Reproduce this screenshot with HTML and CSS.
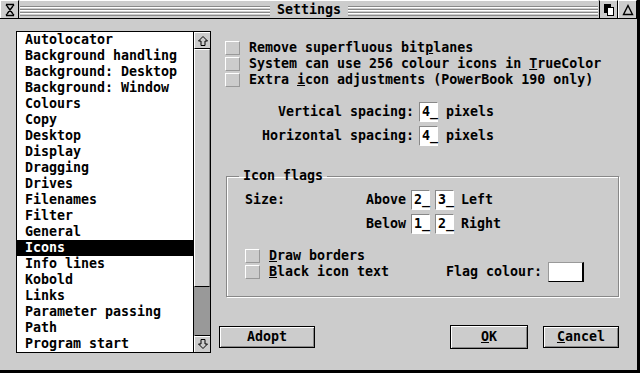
FILE: index.html
```html
<!DOCTYPE html>
<html lang="en">
<head>
  <meta charset="UTF-8">
  <title>Settings</title>
  <link rel="stylesheet" href="styles.css">
</head>
<body>
<div class="window">
  <div class="titlebar">
    <div class="tbox closer">
      <svg width="12" height="14" viewBox="0 0 12 14"><path d="M2 1.5H10M2 12.5H10M2.5 1.5V3M9.5 1.5V3M2.5 11V12.5M9.5 11V12.5M3 3L9 11M9 3L3 11" stroke="#000" stroke-width="1.4" fill="none"/></svg>
    </div>
    <div class="stripes"><span class="title">Settings</span></div>
    <div class="tbox">
      <svg width="12" height="14" viewBox="0 0 12 14"><rect x="1" y="1" width="7" height="9" fill="#000"/><rect x="4.5" y="4.5" width="6" height="8" fill="#fff" stroke="#000"/></svg>
    </div>
    <div class="tbox">
      <svg width="12" height="14" viewBox="0 0 12 14"><path d="M6 2.5L10.5 11.5H1.5Z" stroke="#000" stroke-width="1.4" fill="none"/></svg>
    </div>
  </div>

  <div class="main">
    <div class="listbox">
      <ul class="list">
        <li>Autolocator</li>
        <li>Background handling</li>
        <li>Background: Desktop</li>
        <li>Background: Window</li>
        <li>Colours</li>
        <li>Copy</li>
        <li>Desktop</li>
        <li>Display</li>
        <li>Dragging</li>
        <li>Drives</li>
        <li>Filenames</li>
        <li>Filter</li>
        <li>General</li>
        <li class="selected">Icons</li>
        <li>Info lines</li>
        <li>Kobold</li>
        <li>Links</li>
        <li>Parameter passing</li>
        <li>Path</li>
        <li>Program start</li>
      </ul>
      <div class="scrollbar">
        <div class="arrow up">
          <svg width="12" height="12" viewBox="0 0 12 12"><path d="M6 1.5L10.5 6H8V10.5H4V6H1.5Z" stroke="#000" fill="none"/></svg>
        </div>
        <div class="thumb"></div>
        <div class="track"></div>
        <div class="arrow down">
          <svg width="12" height="12" viewBox="0 0 12 12"><path d="M6 10.5L10.5 6H8V1.5H4V6H1.5Z" stroke="#000" fill="none"/></svg>
        </div>
      </div>
    </div>

    <div class="panel">
      <div class="checks">
        <div class="check"><span class="box"></span><span>Remove superfluous bit<u>p</u>lanes</span></div>
        <div class="check"><span class="box"></span><span>System can use 256 colour icons in <u>T</u>rueColor</span></div>
        <div class="check"><span class="box"></span><span>Extra <u>i</u>con adjustments (PowerBook 190 only)</span></div>
      </div>

      <div class="spacing">
        <span class="label">Vertical spacing:</span><span class="field">4_</span><span>pixels</span>
        <span class="label">Horizontal spacing:</span><span class="field">4_</span><span>pixels</span>
      </div>

      <fieldset class="group">
        <legend>Icon flags</legend>
        <div class="sizes">
          <div class="size-row"><span class="size-label">Size:</span><span>Above</span><span class="field">2_</span><span class="field">3_</span><span>Left</span></div>
          <div class="size-row"><span class="size-label"></span><span>Below</span><span class="field">1_</span><span class="field">2_</span><span>Right</span></div>
        </div>
        <div class="flag-checks">
          <div class="check"><span class="box"></span><span><u>D</u>raw borders</span></div>
          <div class="check">
            <span class="flag-text"><span class="box"></span><span><u>B</u>lack icon text</span></span>
            <span>Flag colour:</span><span class="swatch"></span>
          </div>
        </div>
      </fieldset>

      <div class="buttons">
        <button class="btn adopt">Adopt</button>
        <button class="btn ok"><u>O</u>K</button>
        <button class="btn cancel"><u>C</u>ancel</button>
      </div>
    </div>
  </div>
</div>
</body>
</html>
```

FILE: styles.css
```css
* {
  margin: 0;
  padding: 0;
  box-sizing: border-box;
}

body {
  background: #000;
  width: 640px;
  height: 373px;
  overflow: hidden;
  font-family: "DejaVu Sans Mono", "Liberation Mono", monospace;
  font-weight: bold;
  font-size: 13.3px;
  line-height: 16px;
  color: #000;
}

.window {
  width: 637px;
  height: 370px;
  background: #cccccc;
}

/* title bar */
.titlebar {
  height: 19px;
  display: flex;
  border-bottom: 1px solid #000;
  background: #cccccc;
}

.tbox {
  width: 19px;
  height: 18px;
  display: flex;
  align-items: center;
  justify-content: center;
  border-top: 1px solid #fff;
  border-left: 1px solid #fff;
  border-right: 1px solid #000;
}

.stripes {
  flex: 1;
  display: flex;
  align-items: center;
  justify-content: center;
  margin: 0 1px;
  border-top: 1px solid #fff;
  background: repeating-linear-gradient(#cccccc 0 1px, #888 1px 2px, #fff 2px 3px) 0 4px / 100% 11px no-repeat, #cccccc;
}

.stripes + .tbox {
  border-left: 1px solid #000;
}

.title {
  background: #cccccc;
  padding: 0 7px;
  line-height: 17px;
}

/* main area */
.main {
  display: flex;
  padding: 12px 0 0 16px;
  gap: 8px;
}

.listbox {
  display: flex;
  width: 195px;
  height: 322px;
  border: 1px solid #000;
}

.list {
  list-style: none;
  width: 176px;
  background: #fff;
}

.list li {
  height: 16px;
  padding-left: 8px;
  white-space: nowrap;
}

.list li.selected {
  background: #000;
  color: #fff;
}

.scrollbar {
  width: 17px;
  border-left: 1px solid #000;
  display: flex;
  flex-direction: column;
  background: #999;
}

.arrow {
  height: 17px;
  display: flex;
  align-items: center;
  justify-content: center;
  background: #cccccc;
  border-top: 1px solid #fff;
  border-left: 1px solid #fff;
}

.arrow.up {
  border-bottom: 1px solid #000;
}

.arrow.down {
  border-top: 1px solid #000;
  box-shadow: inset 0 1px #fff;
}

.thumb {
  height: 238px;
  background: #cccccc;
  border-top: 1px solid #fff;
  border-left: 1px solid #fff;
  border-right: 1px solid #888;
  border-bottom: 1px solid #000;
}

.track {
  flex: 1;
}

/* right panel */
.panel {
  width: 400px;
  height: 322px;
  display: flex;
  flex-direction: column;
}

.checks {
  margin: 9px 0 0 6px;
}

.check {
  display: flex;
  align-items: center;
  height: 16px;
  white-space: pre;
}

.box {
  width: 15px;
  height: 14px;
  margin-right: 9px;
  flex: none;
  background: #cccccc;
  border-top: 1px solid #fff;
  border-left: 1px solid #fff;
  border-right: 1px solid #999;
  border-bottom: 1px solid #999;
}

.spacing {
  display: grid;
  grid-template-columns: 189px 19px auto;
  column-gap: 5px;
  row-gap: 4px;
  align-items: center;
  margin: 14px 0 0 6px;
}

.spacing .label {
  text-align: right;
}

.spacing .field + span {
  padding-left: 3px;
}

.field {
  display: inline-block;
  width: 19px;
  height: 20px;
  line-height: 18px;
  padding-left: 2px;
  background: #fff;
  border-top: 1px solid #888;
  border-left: 1px solid #888;
  border-right: 1px solid #fff;
  border-bottom: 1px solid #fff;
}

.group {
  margin: 22px 0 0 7px;
  border: 1px solid #888;
  box-shadow: inset 1px 1px #fff, 1px 1px #fff;
  padding: 0 0 16px 0;
}

.group legend {
  margin-left: 12px;
  padding: 0 4px;
  line-height: 16px;
}

.sizes {
  display: flex;
  flex-direction: column;
  gap: 4px;
  margin: 6px 0 0 18px;
}

.size-row {
  display: flex;
  align-items: center;
  gap: 5px;
  height: 20px;
}

.size-row .field + .field {
  margin-right: 2px;
}

.size-label {
  width: 116px;
}

.flag-checks {
  margin: 14px 0 0 18px;
}

.flag-text {
  display: flex;
  align-items: center;
  width: 201px;
}

.swatch {
  width: 36px;
  height: 20px;
  margin-left: 6px;
  background: #fff;
  border-top: 1px solid #999;
  border-left: 1px solid #999;
  border-right: 2px solid #000;
  border-bottom: 1px solid #000;
}

.buttons {
  margin-top: auto;
  margin-bottom: 4px;
  display: flex;
  align-items: center;
  height: 24px;
}

.btn {
  font: inherit;
  color: #000;
  height: 22px;
  background: #cccccc;
  border: 1px solid #000;
  box-shadow: inset 1px 1px #fff, inset -1px -1px #888;
}

.adopt {
  width: 96px;
}

.ok {
  width: 78px;
  height: 24px;
  margin-left: auto;
}

.cancel {
  width: 76px;
  margin-left: 15px;
}
```
